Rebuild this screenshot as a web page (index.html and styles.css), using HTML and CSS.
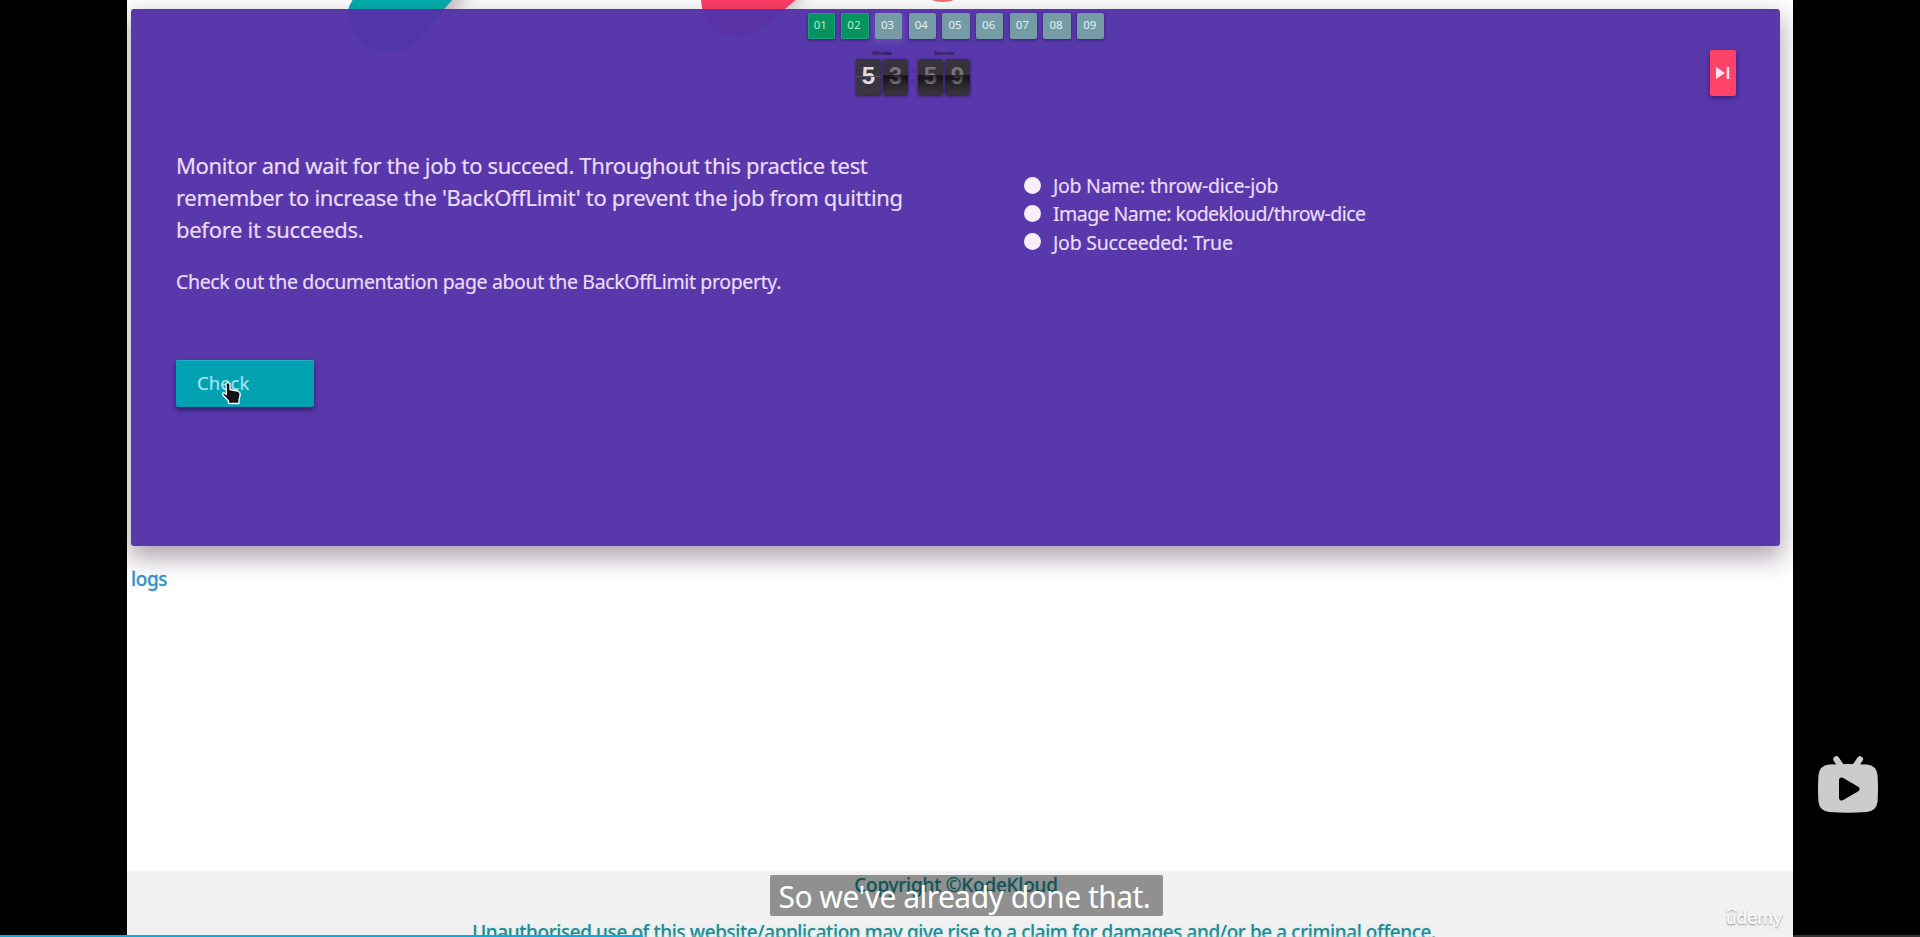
FILE: index.html
```
<!DOCTYPE html>
<html lang="en">
<head>
<meta charset="utf-8">
<title>KodeKloud practice test</title>
<link rel="stylesheet" href="styles.css">
</head>
<body>
<div class="player">
  <main class="page">
    <svg class="shapes" viewBox="0 0 1666 60">
      <defs><filter id="soft" x="-50%" y="-50%" width="200%" height="200%"><feGaussianBlur stdDeviation="8"/></filter></defs>
      <path d="M245 -20 H350 L315 25 Q285 45 255 52 Z" fill="#917783" opacity=".5" filter="url(#soft)"/>
      <path d="M590 -20 H690 L650 20 Q630 35 600 38 Z" fill="#777" opacity=".5" filter="url(#soft)"/>
      <path d="M221 10 Q223 3 227 -2 H327 L317 9 L292 40 C276 57 252 56 237 44 Q220 30 221 10 Z" fill="#02adad"/>
      <path d="M574 -2 H671 L658 9 L635 28 Q610 43 590 33 Q575 23 574 -2 Z" fill="#ff3c64"/>
      <ellipse cx="816" cy="-7" rx="18" ry="9" fill="#f46b75"/>
    </svg>
    <section class="card">
      <nav class="steps">
        <span class="step done">01</span><span class="step done">02</span><span class="step now">03</span><span class="step">04</span><span class="step">05</span><span class="step">06</span><span class="step">07</span><span class="step">08</span><span class="step">09</span>
      </nav>
      <div class="clock">
        <div class="unit"><span class="label">Minutes</span><div class="pair"><b class="digit still">5</b><b class="digit">3</b></div></div>
        <div class="colon"><i></i><i></i></div>
        <div class="unit"><span class="label">Seconds</span><div class="pair"><b class="digit">5</b><b class="digit">9</b></div></div>
      </div>
      <button class="skip"><svg width="14" height="14" viewBox="0 0 14 14"><path d="M0 1 L9 7 L0 13 Z M10.7 1 H13.2 V13 H10.7 Z" fill="#ffe3f0"/></svg></button>
      <div class="columns">
        <div class="question">
          <p class="lead"><span class="l1">Monitor and wait for the job to succeed. Throughout this practice test</span><br><span class="l2">remember to increase the 'BackOffLimit' to prevent the job from quitting</span><br><span class="l3">before it succeeds.</span></p>
          <p class="doc">Check out the documentation page about the BackOffLimit property.</p>
          <button class="check">Check</button>
        </div>
        <ul class="criteria">
          <li><span class="c1">Job Name: throw-dice-job</span></li>
          <li><span class="c2">Image Name: kodekloud/throw-dice</span></li>
          <li><span class="c3">Job Succeeded: True</span></li>
        </ul>
      </div>
    </section>
    <a class="logs">logs</a>
    <footer class="footer">
      <p class="copy">Copyright ©KodeKloud</p>
      <p class="legal">Unauthorised use of this website/application may give rise to a claim for damages and/or be a criminal offence.</p>
    </footer>
  </main>
  <svg class="pointer" width="22" height="24" viewBox="0 0 22 24"><path d="M5 2.8 Q7 .3 9 3 V8.5 L16.5 10 Q19.5 11 19.2 14 L18 19 V22.5 H7.5 V20 L2 14 Q.8 12 3 11.7 L5.5 13.5 Z" fill="#16121a" stroke="#fff" stroke-width="1.3" stroke-linejoin="round"/></svg>
  <div class="caption"><span>So we've already done that.</span></div>
  <div class="brand">udemy<svg class="hat" width="12" height="5" viewBox="0 0 12 5"><path d="M1 4 L6 1 L11 4" fill="none" stroke="#fff" stroke-width="1.7"/></svg></div>
  <svg class="tv" width="60" height="58" viewBox="0 0 60 58"><path d="M18.3 3.2 L23 10 M42 3.2 L37.5 10" stroke="#ccc" stroke-width="6" stroke-linecap="round"/><path d="M11 8.5 Q30 7.5 49 8.5 Q58.500 9.500 59.500 19 Q60.500 33 59.500 46 Q58.500 54.500 49 56 Q30 57.500 11 56 Q1.500 54.500 .5 46 Q-.5 33 .5 19 Q1.500 9.500 11 8.500 Z" fill="#ccc"/><path d="M23.500 24 L39 33 L23.500 42 Z" fill="#000" stroke="#000" stroke-width="5" stroke-linejoin="round"/></svg>
  <div class="progress"><div class="played"></div></div>
</div>
</body>
</html>
```
FILE: styles.css
```
* { box-sizing: border-box; }
body { margin: 0; background: #000; overflow: hidden; font-family: "Noto Sans", "Open Sans", sans-serif; }
p, ul { margin: 0; padding: 0; }
button { border: 0; padding: 0; font: inherit; }
.player { position: relative; width: 1920px; height: 937px; overflow: hidden; display: flex; justify-content: center; }
.page { position: relative; width: 1666px; height: 937px; background: #fff; padding: 9px 13px 0 4px; display: flex; flex-direction: column; overflow: hidden; }
.shapes { position: absolute; left: 0; top: 0; width: 1666px; height: 60px; }
.card { position: relative; flex: none; height: 537px; background: rgba(84,50,168,.97); border-radius: 3px; box-shadow: 0 10px 24px 2px rgba(60,40,60,.42); display: flex; flex-direction: column; align-items: center; color: #eadcf5; }
.steps { display: flex; gap: 6.4px; margin: 4px 0 0 1px; }
.step { width: 27.3px; height: 26px; padding-right: 2px; border-radius: 2px; background: #759ca5; color: #e2eff3; font-size: 11.5px; line-height: 24px; text-align: center; box-shadow: 0 1px 3px rgba(30,10,80,.6); }
.done { background: #05945f; color: #b3edcf; box-shadow: 0 0 0 1px #18a477 inset, 0 1px 3px rgba(30,10,80,.6); }
.now { box-shadow: 0 2px 5px 2px rgba(125,100,195,.35); }
.clock { display: flex; margin: 10px 0 0 -85px; align-items: flex-end; height: 46px; }
.unit { display: flex; flex-direction: column; align-items: center; }
.label { font-size: 5px; line-height: 7px; color: #2b1850; margin-bottom: 2px; -webkit-text-stroke: .2px; }
.pair { display: flex; gap: 2px; }
.digit { width: 25px; height: 36px; border-radius: 3px; text-align: center; font: bold 24px/34px "Liberation Sans", sans-serif; color: #777279; background: linear-gradient(#38343f, #353039 45%, #1b1920 50%, #242027 60%, #39343e); box-shadow: 0 1px 3px rgba(20,10,45,.7); position: relative; }
.digit::after { content: ""; position: absolute; left: 0; right: 0; top: 16px; height: 8px; background: linear-gradient(rgba(20,17,24,.8), rgba(20,17,24,.1)); }
.still { color: #dedde1; background: #3a3641; }
.still::after { height: 1px; top: 17px; background: #55505c; }
.colon { width: 10px; height: 36px; display: flex; flex-direction: column; align-items: center; gap: 6px; padding-top: 10px; }
.colon i { width: 4px; height: 4px; border-radius: 50%; background: #50319a; }
.skip { position: absolute; left: 1579px; top: 41px; width: 26px; height: 46px; border-radius: 2px; background: #ff4267; box-shadow: 0 2px 5px rgba(35,10,80,.6); display: flex; align-items: center; justify-content: center; }
.columns { align-self: stretch; display: flex; padding: 54px 0 0 45px; -webkit-text-stroke: .2px; }
.question { width: 847.5px; white-space: nowrap; }
.lead { font-size: 22px; line-height: 32.2px; }
.l1 { letter-spacing: -.37px; }
.l2 { letter-spacing: -.32px; }
.l3 { letter-spacing: -.29px; }
.doc { font-size: 19.5px; line-height: 28px; margin-top: 22px; letter-spacing: -.36px; }
.check { display: block; width: 138px; height: 47px; margin-top: 64px; padding: 0 0 2px 21px; text-align: left; border-radius: 2px; background: #02a1b2; color: #a1e5ef; font-size: 18.5px; box-shadow: 0 3px 5px rgba(25,15,75,.65), inset 0 1px #24b0c1; }
.criteria { list-style: none; font-size: 19.5px; line-height: 28.3px; padding-top: 23px; white-space: nowrap; }
.criteria li { display: flex; align-items: center; gap: 12.5px; }
.criteria li::before { content: ""; width: 17px; height: 17px; margin-top: -2px; border-radius: 50%; background: #f8effb; }
.c1 { letter-spacing: -.27px; }
.c2 { letter-spacing: -.55px; }
.c3 { letter-spacing: -.22px; }
.logs { font-size: 19px; line-height: 28px; font-weight: 500; color: #3796c8; margin-top: 19px; letter-spacing: -.4px; -webkit-text-stroke: .3px; }
.footer { margin: 278px -13px 0 -4px; height: 66px; flex: none; background: #f1f1f1; text-align: center; font-weight: 500; color: #27898d; font-size: 19px; white-space: nowrap; text-shadow: 0 0 2px #9ee7ee; padding-right: 8px; }
.copy { line-height: 28px; letter-spacing: -.27px; }
.legal { line-height: 28px; margin: 19px 4px 0 0; letter-spacing: -.43px; }
.pointer { position: absolute; left: 221px; top: 381px; }
.caption { position: absolute; left: 770px; top: 875px; width: 393px; height: 41px; padding-left: 8.5px; background: rgba(0,0,0,.4); border-radius: 2px; color: #fff; font-size: 30px; line-height: 43px; letter-spacing: -.52px; white-space: nowrap; }
.brand { position: absolute; left: 1726px; top: 905px; color: #fff; font: 500 19px/24px Lato, sans-serif; text-shadow: 0 1px 2px #888; }
.hat { position: absolute; left: 0; top: 2px; filter: drop-shadow(0 1px 1px #999); }
.tv { position: absolute; left: 1818px; top: 755.5px; }
.progress { position: absolute; left: 0; bottom: 0; width: 1920px; height: 2px; background: rgba(255,255,255,.2); }
.played { width: 643px; height: 2px; background: #00aeec; }
```
